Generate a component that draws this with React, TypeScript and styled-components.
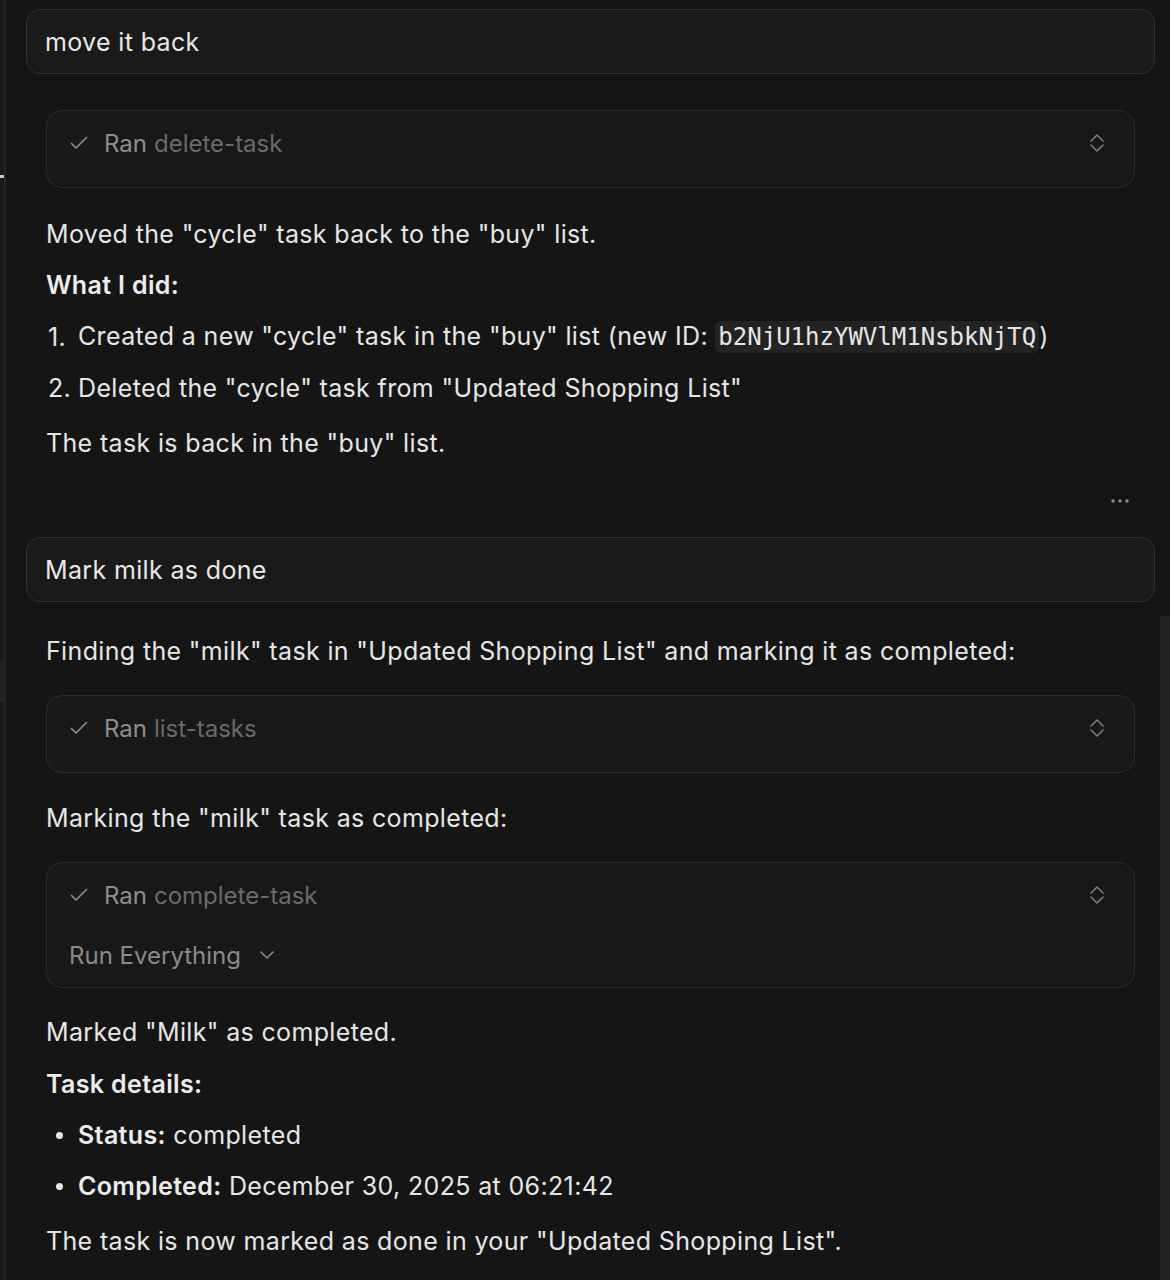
import React from 'react';
import styled, { createGlobalStyle } from 'styled-components';

const Global = createGlobalStyle`
  html, body { margin: 0; padding: 0; background: #151515; }
  body {
    font-family: Inter, "Noto Sans", "Liberation Sans", sans-serif;
    -webkit-font-smoothing: antialiased;
  }
  * { box-sizing: border-box; }
`;

const Page = styled.div`
  position: relative;
  display: flex;
  min-height: 1280px;
  background: #151515;
  overflow: hidden;
  font-size: 25px;
  letter-spacing: 0.35px;
`;

const Rail = styled.div`
  position: relative;
  flex: none;
  width: 6px;
  background: #191919;
  border-right: 2px solid #242424;
`;

const RailMark = styled.div<{ $top: number; $h: number; $c: string }>`
  position: absolute;
  left: 0;
  width: 4px;
  top: ${(p) => p.$top}px;
  height: ${(p) => p.$h}px;
  background: ${(p) => p.$c};
`;

const ScrollThumb = styled.div`
  position: absolute;
  right: 0;
  top: 616px;
  bottom: 0;
  width: 10px;
  background: #232323;
`;

const Main = styled.main`
  flex: 1;
  display: flex;
  flex-direction: column;
  padding: 9px 15px 0 20px;
`;

const UserBubble = styled.div<{ $stacked?: boolean; $mt?: number }>`
  position: relative;
  display: flex;
  align-items: center;
  height: 65px;
  margin-top: ${(p) => p.$mt ?? 0}px;
  padding: 0 18px;
  border: 1px solid #2f2f2f;
  border-radius: 14px;
  background: #1a1a1a;
  color: #e8e8e8;
  ${(p) =>
    p.$stacked
      ? `&::after {
    content: '';
    position: absolute;
    left: 24px;
    right: 24px;
    bottom: -10px;
    height: 20px;
    border: 1px solid #1d1d1d;
    border-top: none;
    border-radius: 0 0 14px 14px;
    z-index: -1;
  }`
      : ''}
`;

const Assistant = styled.section`
  display: flex;
  flex-direction: column;
  padding: 0 20px;
`;

const Para = styled.p<{ $mt?: number }>`
  margin: ${(p) => p.$mt ?? 0}px 0 0;
  line-height: 36px;
  color: #e6e6e6;
  white-space: nowrap;
`;

const Strong = styled.strong`
  font-weight: 600;
  color: #ececec;
`;

const Code = styled.code`
  font-family: "DejaVu Sans Mono", "Liberation Mono", monospace;
  font-size: 24px;
  letter-spacing: 0;
  background: #232323;
  border-radius: 6px;
  padding: 2px 3px;
  color: #e6e6e6;
`;

const Item = styled.div<{ $mt?: number }>`
  display: flex;
  align-items: center;
  margin-top: ${(p) => p.$mt ?? 0}px;
  line-height: 36px;
  color: #e6e6e6;
  white-space: nowrap;
`;

const Marker = styled.span`
  flex: none;
  width: 32px;
  padding-left: 2px;
  display: flex;
  align-items: center;
`;

const Dot = styled.span`
  display: block;
  width: 7px;
  height: 7px;
  margin-left: 8px;
  border-radius: 50%;
  background: #e6e6e6;
`;

const ToolCard = styled.div<{ $mt: number }>`
  display: flex;
  flex-direction: column;
  margin-top: ${(p) => p.$mt}px;
  padding: 14px 30px 14px 22px;
  border: 1px solid #2b2b2b;
  border-radius: 16px;
  background: #181818;
  font-size: 24px;
  letter-spacing: 0;
`;

const ToolHeader = styled.div`
  display: flex;
  align-items: center;
  height: 36px;
  margin-bottom: 12px;
`;

const Ran = styled.span`
  color: #8e8e8e;
  margin-left: 15px;
`;

const ToolName = styled.span`
  color: #6a6a6a;
  margin-left: 7px;
`;

const Spacer = styled.span`
  flex: 1;
`;

const ToolFooter = styled.div`
  display: flex;
  align-items: center;
  gap: 19px;
  height: 36px;
  margin-top: 12px;
  color: #8a8a8a;
`;

const DotsRow = styled.div<{ $mt: number }>`
  display: flex;
  justify-content: flex-end;
  align-items: center;
  height: 20px;
  margin-top: ${(p) => p.$mt}px;
  padding-right: 6px;
`;

const CheckIcon = () => (
  <svg width="20" height="20" viewBox="0 0 20 20" fill="none" stroke="#8c8c8c" strokeWidth="1.7" strokeLinecap="round" strokeLinejoin="round">
    <path d="M2.5 10.5 L7 15 L17.5 4.5" />
  </svg>
);

const UpDownIcon = () => (
  <svg width="14" height="20" viewBox="0 0 14 20" fill="none" stroke="#7c7c7c" strokeWidth="1.6" strokeLinecap="round" strokeLinejoin="round">
    <path d="M1 8 L7 2 L13 8" />
    <path d="M1 12 L7 18 L13 12" />
  </svg>
);

const ChevronDown = () => (
  <svg width="14" height="10" viewBox="0 0 14 10" fill="none" stroke="#8a8a8a" strokeWidth="1.6" strokeLinecap="round" strokeLinejoin="round">
    <path d="M1 2 L7 8 L13 2" />
  </svg>
);

const DotsIcon = () => (
  <svg width="18" height="6" viewBox="0 0 18 6" fill="#8a8a8a">
    <circle cx="2" cy="3" r="1.8" />
    <circle cx="9" cy="3" r="1.8" />
    <circle cx="16" cy="3" r="1.8" />
  </svg>
);

const Tool: React.FC<{ name: string; mt: number; footer?: boolean }> = ({ name, mt, footer }) => (
  <ToolCard $mt={mt}>
    <ToolHeader>
      <CheckIcon />
      <Ran>Ran</Ran>
      <ToolName>{name}</ToolName>
      <Spacer />
      <UpDownIcon />
    </ToolHeader>
    {footer && (
      <ToolFooter>
        <span>Run Everything</span>
        <ChevronDown />
      </ToolFooter>
    )}
  </ToolCard>
);

export default function App() {
  return (
    <Page>
      <Global />
      <Rail>
        <RailMark $top={175} $h={3} $c="#c8c8c8" />
        <RailMark $top={660} $h={42} $c="#222222" />
      </Rail>
      <Main>
        <UserBubble $stacked>move it back</UserBubble>
        <Assistant>
          <Tool name="delete-task" mt={36} />
          <Para $mt={28}>Moved the "cycle" task back to the "buy" list.</Para>
          <Para $mt={15}>
            <Strong>What I did:</Strong>
          </Para>
          <Item $mt={15}>
            <Marker>1.</Marker>
            <span>
              Created a new "cycle" task in the "buy" list (new ID: <Code>b2NjU1hzYWVlM1NsbkNjTQ</Code>)
            </span>
          </Item>
          <Item $mt={15}>
            <Marker>2.</Marker>
            <span>Deleted the "cycle" task from "Updated Shopping List"</span>
          </Item>
          <Para $mt={19}>The task is back in the "buy" list.</Para>
          <DotsRow $mt={30}>
            <DotsIcon />
          </DotsRow>
        </Assistant>
        <UserBubble $mt={26}>Mark milk as done</UserBubble>
        <Assistant>
          <Para $mt={31}>Finding the "milk" task in "Updated Shopping List" and marking it as completed:</Para>
          <Tool name="list-tasks" mt={26} />
          <Para $mt={27}>Marking the "milk" task as completed:</Para>
          <Tool name="complete-task" mt={26} footer />
          <Para $mt={26}>Marked "Milk" as completed.</Para>
          <Para $mt={16}>
            <Strong>Task details:</Strong>
          </Para>
          <Item $mt={15}>
            <Marker>
              <Dot />
            </Marker>
            <span>
              <Strong>Status:</Strong> completed
            </span>
          </Item>
          <Item $mt={15}>
            <Marker>
              <Dot />
            </Marker>
            <span>
              <Strong>Completed:</Strong> December 30, 2025 at 06:21:42
            </span>
          </Item>
          <Para $mt={19}>The task is now marked as done in your "Updated Shopping List".</Para>
        </Assistant>
      </Main>
      <ScrollThumb />
    </Page>
  );
}
